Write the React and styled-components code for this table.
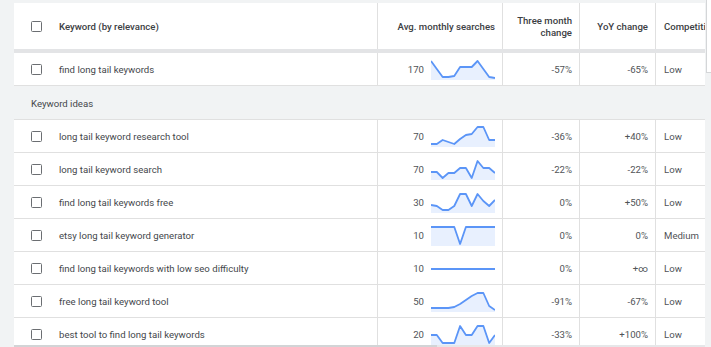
import React from "react";
import styled, { createGlobalStyle } from "styled-components";

const GlobalStyle = createGlobalStyle`
  html, body {
    margin: 0;
    padding: 0;
    background: #f1f3f4;
    overflow: hidden;
  }
  body {
    font-family: Roboto, "Liberation Sans", sans-serif;
  }
`;

const Page = styled.div`
  position: relative;
  width: 711px;
  height: 347px;
  padding: 3px 6px 0 14px;
  box-sizing: border-box;
  overflow: hidden;
`;

const Table = styled.div`
  width: 691px;
  overflow: hidden;
  background: #fff;
`;

const COLS = "363px 125px 77px 76px 90px";

const HeaderRow = styled.div`
  display: grid;
  grid-template-columns: ${COLS};
  height: 46px;
  border-bottom: 4px solid #e3e4e6;
`;

const Row = styled.div`
  display: grid;
  grid-template-columns: ${COLS};
  height: 32px;
  border-bottom: 1px solid #e0e0e0;
`;

const Cell = styled.div`
  display: flex;
  align-items: center;
  justify-content: ${(p) => (p.$left ? "flex-start" : "flex-end")};
  gap: 7px;
  padding: ${(p) => (p.$left ? "1px 0 0 8px" : "1px 7px 0 0")};
  border-left: ${(p) => (p.$first ? "none" : "1px solid #e0e0e0")};
  font-size: 9.6px;
  color: #505357;
  white-space: nowrap;
  box-sizing: border-box;
`;

const KeywordCell = styled.div`
  display: flex;
  align-items: center;
  padding: 1px 0 0 17px;
  font-size: 9.6px;
  color: #44474b;
`;

const HeadText = styled.div`
  font-size: 9.6px;
  font-weight: 500;
  color: #3c4043;
  line-height: 12px;
  text-align: ${(p) => (p.$left ? "left" : "right")};
  white-space: nowrap;
`;

const Check = styled.span`
  display: inline-block;
  width: 11px;
  height: 11px;
  border: 1.3px solid #6b6e72;
  border-radius: 1.5px;
  box-sizing: border-box;
  margin-right: 17px;
  flex: none;
`;

const SectionRow = styled.div`
  height: 32px;
  display: flex;
  align-items: center;
  padding: 1px 0 0 17px;
  background: #f1f3f4;
  border-bottom: 1px solid #e0e0e0;
  font-size: 9.6px;
  color: #44474b;
`;

const SideTab = styled.div`
  position: absolute;
  top: 0;
  left: 706px;
  width: 10px;
  height: 72px;
  background: #fff;
  border-left: 1px solid #d4d6d8;
  border-bottom: 1px solid #d4d6d8;
`;

const ScrollTrack = styled.div`
  position: absolute;
  left: 14px;
  bottom: 0;
  width: 691px;
  height: 2px;
  background: #e6e7e9;
`;

const ScrollThumb = styled.div`
  width: 423px;
  height: 2px;
  background: #d2d4d6;
`;

const SparkSvg = styled.svg`
  display: block;
  width: 64px;
  height: 21px;
  flex: none;
`;

function Spark({ pts }) {
  const step = 64 / 11;
  const flat = pts.every((v) => v === pts[0]);
  const line = pts
    .map((y, i) => `${i === 0 ? "M" : "L"}${(i * step).toFixed(2)} ${y}`)
    .join(" ");
  return (
    <SparkSvg viewBox="0 0 64 21">
      {!flat && <path d={`${line} L64 21 L0 21 Z`} fill="#e8f0fe" />}
      <path
        d={line}
        fill="none"
        stroke="#5b95f7"
        strokeWidth="1.8"
        strokeLinejoin="round"
      />
    </SparkSvg>
  );
}

const main = {
  kw: "find long tail keywords",
  avg: "170",
  pts: [2, 10, 18, 18, 17, 8, 8, 8, 2, 10, 18, 19],
  three: "-57%",
  yoy: "-65%",
  comp: "Low",
};

const ideas = [
  {
    kw: "long tail keyword research tool",
    avg: "70",
    pts: [18, 18, 14, 16, 18, 13, 9, 8, 1, 1, 14, 14],
    three: "-36%",
    yoy: "+40%",
    comp: "Low",
  },
  {
    kw: "long tail keyword search",
    avg: "70",
    pts: [13, 13, 19, 14, 14, 9, 9, 19, 2, 9, 9, 14],
    three: "-22%",
    yoy: "-22%",
    comp: "Low",
  },
  {
    kw: "find long tail keywords free",
    avg: "30",
    pts: [13, 14, 18, 18, 14, 2, 2, 14, 2, 9, 14, 8],
    three: "0%",
    yoy: "+50%",
    comp: "Low",
  },
  {
    kw: "etsy long tail keyword generator",
    avg: "10",
    pts: [2, 2, 2, 2, 2, 19, 2, 2, 2, 2, 2, 2],
    three: "0%",
    yoy: "0%",
    comp: "Medium",
  },
  {
    kw: "find long tail keywords with low seo difficulty",
    avg: "10",
    pts: [11, 11, 11, 11, 11, 11, 11, 11, 11, 11, 11, 11],
    three: "0%",
    yoy: "+∞",
    comp: "Low",
  },
  {
    kw: "free long tail keyword tool",
    avg: "50",
    pts: [17, 17, 17, 17, 16, 13, 9, 5, 2, 2, 15, 19],
    three: "-91%",
    yoy: "-67%",
    comp: "Low",
  },
  {
    kw: "best tool to find long tail keywords",
    avg: "20",
    pts: [11, 11, 19, 19, 19, 2, 11, 11, 2, 2, 19, 11],
    three: "-33%",
    yoy: "+100%",
    comp: "Low",
  },
];

function KeywordRow({ item }) {
  return (
    <Row>
      <KeywordCell>
        <Check />
        {item.kw}
      </KeywordCell>
      <Cell>
        {item.avg}
        <Spark pts={item.pts} />
      </Cell>
      <Cell>{item.three}</Cell>
      <Cell>{item.yoy}</Cell>
      <Cell $left>{item.comp}</Cell>
    </Row>
  );
}

export default function App() {
  return (
    <>
      <GlobalStyle />
      <Page>
        <Table>
          <HeaderRow>
            <KeywordCell>
              <Check />
              <HeadText $left>Keyword (by relevance)</HeadText>
            </KeywordCell>
            <Cell>
              <HeadText>Avg. monthly searches</HeadText>
            </Cell>
            <Cell>
              <HeadText>
                Three month
                <br />
                change
              </HeadText>
            </Cell>
            <Cell>
              <HeadText>YoY change</HeadText>
            </Cell>
            <Cell $left>
              <HeadText $left>Competition</HeadText>
            </Cell>
          </HeaderRow>
          <KeywordRow item={main} />
          <SectionRow>Keyword ideas</SectionRow>
          {ideas.map((item) => (
            <KeywordRow key={item.kw} item={item} />
          ))}
        </Table>
        <SideTab />
        <ScrollTrack>
          <ScrollThumb />
        </ScrollTrack>
      </Page>
    </>
  );
}
